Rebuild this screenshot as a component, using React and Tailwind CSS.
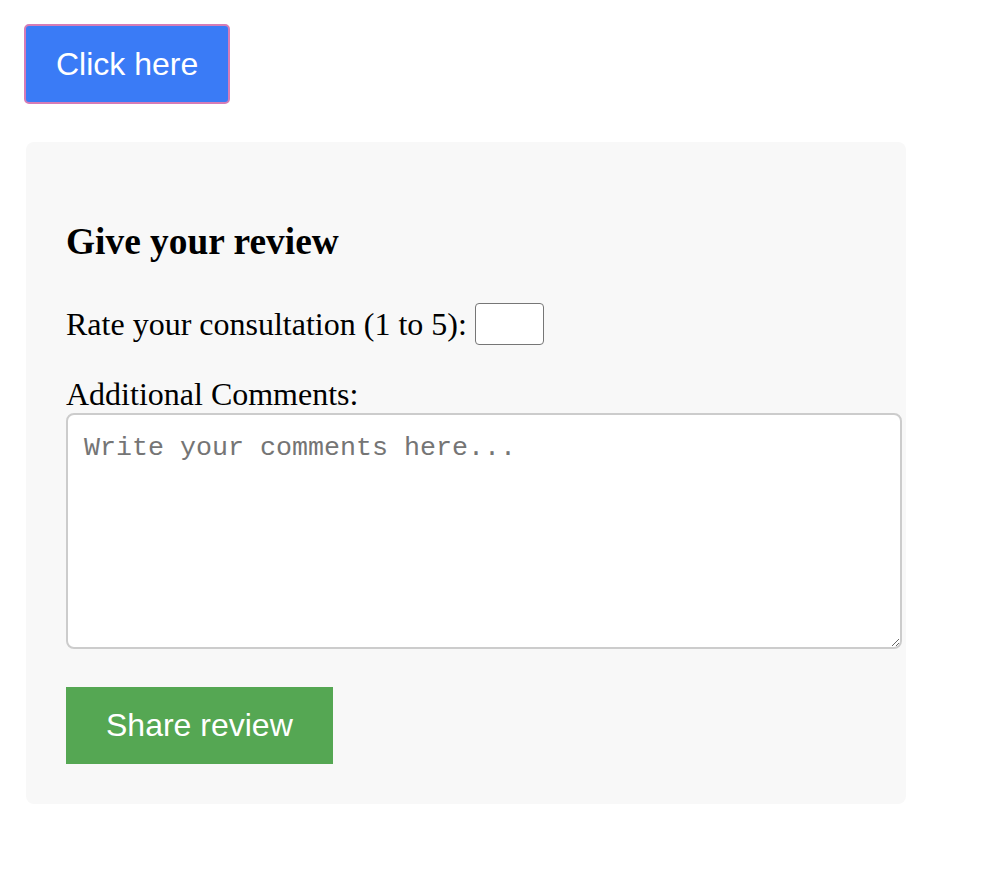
export default function App() {
  return (
    <div className="min-h-screen bg-white pt-[24px] pl-[24px]" style={{ fontFamily: '"Liberation Serif", serif' }}>
      <button className="px-[30px] py-[20px] bg-[#3a7bf6] text-white text-[32px] leading-[36px] border-2 border-[#d67cb6] rounded-[5px] font-['Liberation_Sans',sans-serif]">
        Click here
      </button>

      <div className="ml-[2px] mt-[38px] w-[880px] bg-[#f8f8f8] rounded-[8px] p-[40px]">
        <h3 className="mt-[39px] mb-[40px] text-[37.4px] leading-[42px] font-bold text-black">
          Give your review
        </h3>

        <div className="flex items-center text-[32px] leading-[37px] text-black">
          <span>Rate your consultation (1 to 5):</span>
          <input
            type="number"
            className="ml-[8px] w-[69px] h-[42px] bg-white border-[1.5px] border-[#767676] rounded-[4px]"
          />
        </div>

        <div className="mt-[32px] mb-[2px] text-[32px] leading-[34px] text-black">Additional Comments:</div>
        <textarea
          placeholder="Write your comments here..."
          className="block w-[836px] h-[236px] bg-white border-2 border-[#cccccc] rounded-[8px] px-[16px] pt-[18px] pb-[14px] text-[26.67px] leading-[30px] font-['Liberation_Mono',monospace] placeholder:text-[#757575]"
        />

        <button className="mt-[38px] px-[40px] py-[20px] bg-[#55a753] text-white text-[32px] leading-[37px] font-['Liberation_Sans',sans-serif]">
          Share review
        </button>
      </div>
    </div>
  );
}
